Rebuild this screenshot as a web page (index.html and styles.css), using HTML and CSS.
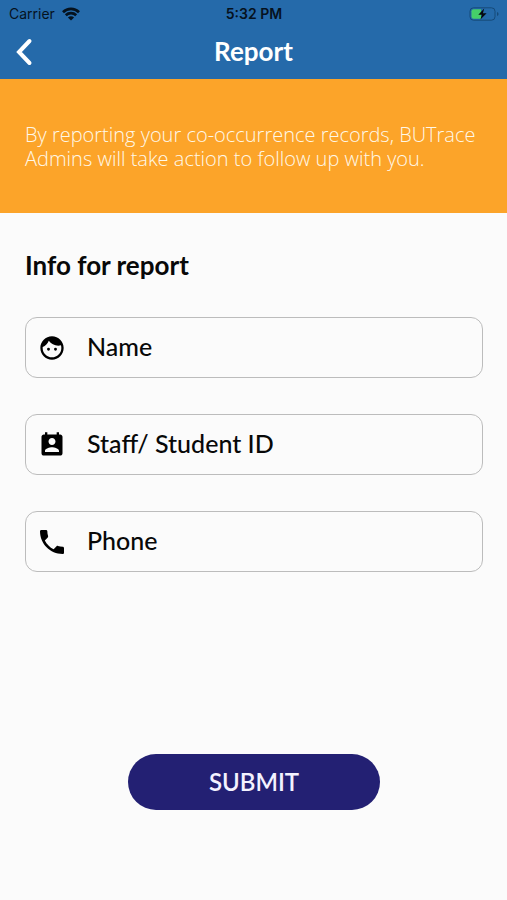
FILE: index.html
```html
<!DOCTYPE html>
<html lang="en">
<head>
<meta charset="utf-8">
<meta name="viewport" content="width=device-width, initial-scale=1">
<title>Report</title>
<link rel="stylesheet" href="styles.css">
</head>
<body>
<header class="topbar">
  <div class="status">
    <div class="status-left">
      <span>Carrier</span>
      <svg class="wifi" viewBox="0 0 18 14" aria-hidden="true">
        <path d="M1 5.200a11.500 11.500 0 0 1 16 0M3.800 8.200a7.500 7.500 0 0 1 10.400 0" fill="none" stroke="currentColor" stroke-width="2.700"/>
        <path d="M9 13.600 5.900 10.500a4.400 4.400 0 0 1 6.200 0z" fill="currentColor"/>
      </svg>
    </div>
    <span class="clock">5:32 PM</span>
    <svg class="battery" viewBox="0 0 30 14" aria-hidden="true">
      <rect x="1" y=".8" width="25" height="12.400" rx="3.500" fill="none" stroke="#164a78"/>
      <path d="M28 5v4q1.600-.7 1.600-2T28 5z" fill="#164a78"/>
      <path d="M4.500 2.300h7.500v9.400H4.500Q2.500 11.700 2.500 9.700V4.300Q2.500 2.300 4.500 2.300z" fill="#45cf69"/>
      <path d="M15.200 1.600 9.300 7.700h3.600l-1.500 4.900 6.200-6.300h-3.700z" fill="#05090d"/>
    </svg>
  </div>
  <div class="nav">
    <button class="back" type="button" aria-label="Back">
      <svg viewBox="0 0 18 28" aria-hidden="true"><path d="M14.500 3 4 14l10.500 11" fill="none" stroke="currentColor" stroke-width="4" stroke-linecap="round" stroke-linejoin="miter"/></svg>
    </button>
    <h1 class="title">Report</h1>
  </div>
</header>
<p class="notice">By reporting your co-occurrence records, BUTrace Admins will take action to follow up with you.</p>
<main class="content">
  <h2 class="heading">Info for report</h2>
  <form class="form">
    <label class="field">
      <svg class="icon" viewBox="0 0 24 24" aria-hidden="true"><path fill="currentColor" d="M9 11.750a1.250 1.250 0 1 0 0 2.500 1.250 1.250 0 0 0 0-2.500zm6 0a1.250 1.250 0 1 0 0 2.500 1.250 1.250 0 0 0 0-2.500zM12 2C6.480 2 2 6.480 2 12s4.480 10 10 10 10-4.480 10-10S17.520 2 12 2zm0 18c-4.410 0-8-3.590-8-8 0-.290.020-.580.050-.860 2.360-1.050 4.230-2.980 5.210-5.370C11.070 8.330 14.050 10 17.420 10c.780 0 1.530-.090 2.250-.260.210.710.330 1.470.330 2.260 0 4.410-3.590 8-8 8z"/></svg>
      <input type="text" name="name" placeholder="Name" aria-label="Name">
    </label>
    <label class="field">
      <svg class="icon" viewBox="0 0 24 24" aria-hidden="true"><path fill="currentColor" d="M19 3h-1V1h-2v2H8V1H6v2H5c-1.110 0-2 .9-2 2v14c0 1.100.890 2 2 2h14c1.100 0 2-.9 2-2V5c0-1.100-.9-2-2-2zm-7 3c1.660 0 3 1.340 3 3s-1.340 3-3 3-3-1.340-3-3 1.340-3 3-3zm6 12H6v-1c0-2 4-3.100 6-3.100s6 1.100 6 3.100v1z"/></svg>
      <input type="text" name="id" placeholder="Staff/ Student ID" aria-label="Staff/ Student ID">
    </label>
    <label class="field">
      <svg class="icon" viewBox="1.500 1.500 21 21" aria-hidden="true"><path fill="currentColor" d="M6.620 10.790c1.440 2.830 3.760 5.140 6.590 6.590l2.200-2.200c.270-.270.670-.360 1.020-.240 1.120.370 2.330.570 3.570.570.550 0 1 .450 1 1V20c0 .550-.450 1-1 1-9.390 0-17-7.610-17-17 0-.550.450-1 1-1h3.500c.550 0 1 .450 1 1 0 1.250.2 2.450.570 3.570.110.350.030.740-.250 1.020l-2.200 2.200z"/></svg>
      <input type="tel" name="phone" placeholder="Phone" aria-label="Phone">
    </label>
    <button class="submit" type="submit">SUBMIT</button>
  </form>
</main>
</body>
</html>
```
FILE: styles.css
```css
* {
  box-sizing: border-box;
}

body {
  margin: 0;
  min-height: 100vh;
  background: #fbfbfb;
  color: #080808;
  font-family: Lato, "Open Sans", sans-serif;
}

h1,
h2,
p {
  margin: 0;
}

.topbar {
  background: #256aaa;
}

.status {
  display: grid;
  grid-template-columns: 1fr auto 1fr;
  align-items: center;
  height: 27px;
  padding: 0 8px 0 9px;
  color: #05121e;
  font: 500 14px/16px Inter, sans-serif;
}

.status-left {
  display: flex;
  align-items: center;
  gap: 7px;
  font-weight: 400;
}

.wifi {
  width: 18px;
  height: 14px;
}

.clock {
  font-weight: 600;
}

.battery {
  justify-self: end;
  width: 30px;
  height: 14px;
}

.nav {
  display: grid;
  grid-template-columns: 48px 1fr 48px;
  align-items: center;
  height: 52px;
  padding-bottom: 2px;
  color: #fff;
}

.back {
  display: flex;
  justify-content: center;
  padding: 0;
  border: 0;
  background: none;
  color: inherit;
}

.back svg {
  width: 18px;
  height: 28px;
}

.title {
  padding-bottom: 2px;
  text-align: center;
  font-size: 26px;
  line-height: 32px;
  font-weight: 700;
}

.notice {
  min-height: 134px;
  padding: 44px 24px 42px 25px;
  background: #fca429;
  color: #fff8e8;
  font: 300 20px/24px "Open Sans", sans-serif;
}

.content {
  padding: 36px 24px 88px 25px;
}

.heading {
  font-size: 26px;
  line-height: 32px;
  font-weight: 700;
}

.form {
  display: flex;
  flex-direction: column;
  gap: 36px;
  margin-top: 36px;
}

.field {
  display: flex;
  align-items: center;
  gap: 21px;
  height: 61px;
  padding: 0 12px;
  border: 1px solid #bcbcbc;
  border-radius: 12px;
}

.icon {
  flex: none;
  width: 28px;
  height: 28px;
  color: #000;
}

.field input {
  flex: 1;
  min-width: 0;
  padding: 0 0 4px;
  border: 0;
  outline: 0;
  background: none;
  color: inherit;
  font: 500 25px/32px Lato, sans-serif;
}

.field input::placeholder {
  color: inherit;
  opacity: 1;
}

.submit {
  align-self: center;
  width: 55%;
  height: 56px;
  margin-top: 146px;
  padding: 0;
  border: 0;
  border-radius: 28px;
  background: #232073;
  color: #f3f2ff;
  font: 600 24px/32px Lato, sans-serif;
}
```
